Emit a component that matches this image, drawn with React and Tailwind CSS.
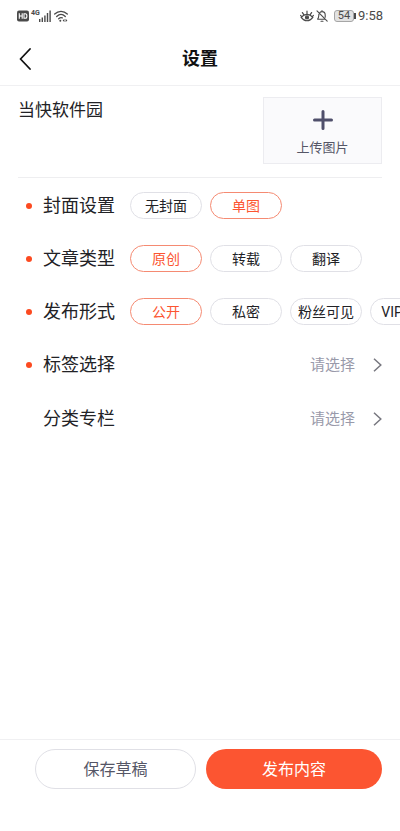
import { useState } from "react";

const optionRows = [
  {
    name: "cover",
    label: "封面设置",
    options: ["无封面", "单图"],
    initial: "单图",
  },
  {
    name: "type",
    label: "文章类型",
    options: ["原创", "转载", "翻译"],
    initial: "原创",
  },
  {
    name: "visibility",
    label: "发布形式",
    options: ["公开", "私密", "粉丝可见", "VIP可见"],
    initial: "公开",
  },
];

const selectRows = [
  { label: "标签选择", required: true },
  { label: "分类专栏", required: false },
];

const StatusBar = () => (
  <div className="flex h-8 items-center justify-between px-[17px] text-[#4a4a4a]">
    <div className="flex items-center">
      {/* HD badge */}
      <svg className="h-3 w-3" viewBox="0 0 12 12">
        <rect x="0" y="0.5" width="12" height="11" rx="2" fill="#4a4a4a" />
        <path
          d="M2.3 3.2v5.6M5.2 3.2v5.6M2.3 6h2.9M7 3.7h1.3c1 0 1.6.8 1.6 2.3S9.3 8.3 8.3 8.3H7z"
          fill="none"
          stroke="#fff"
          strokeWidth="1.1"
        />
      </svg>
      <span className="ml-0.5 self-start font-['Roboto',sans-serif] text-[7px] font-bold leading-[7px]">
        4G
      </span>
      {/* Signal */}
      <svg className="-ml-px h-3 w-3" viewBox="0 0 12 12" fill="currentColor">
        <rect x="0" y="9" width="1.4" height="3" />
        <rect x="2.6" y="7.5" width="1.4" height="4.5" />
        <rect x="5.2" y="5.5" width="1.4" height="6.5" />
        <rect x="7.8" y="3" width="1.4" height="9" />
        <rect x="10.4" y="0.5" width="1.4" height="11.5" />
      </svg>
      {/* Wi-Fi */}
      <svg
        className="ml-[3px] h-3 w-3.5"
        viewBox="0 0 14 12"
        fill="none"
        stroke="currentColor"
        strokeWidth="1.3"
        strokeLinecap="round"
      >
        <path d="M0.7 4C4.4 0.4 9.6 0.4 13.3 4" />
        <path d="M2.7 6.5c2.6-2.5 6-2.5 8.6 0" />
        <path d="M4.7 8.7c1.3-1.2 2.6-1.3 3.6-.8" />
        <circle cx="6.3" cy="10.7" r="1" fill="currentColor" stroke="none" />
        <path
          d="M10.400 8.700L8.600 10.400l1.800 1.700zM11.600 8.700l1.800 1.700-1.800 1.700z"
          fill="currentColor"
          stroke="none"
        />
      </svg>
    </div>

    <div className="flex items-center">
      {/* Eye comfort */}
      <svg
        className="h-3 w-3.5"
        viewBox="0 0 14 12"
        fill="none"
        stroke="currentColor"
        strokeWidth="1.2"
        strokeLinecap="round"
      >
        <path d="M1.2 7.300c3.200-3.800 8.400-3.800 11.600 0-3.200 4.600-8.400 4.600-11.600 0z" />
        <circle cx="7" cy="7.400" r="1.500" fill="currentColor" />
        <path d="M7 4V1.200M3.800 4.700L2.400 2.600M10.200 4.700l1.400-2.100M1.600 6.600L.6 5.400M12.400 6.600l1-1.200" />
      </svg>
      {/* Muted bell */}
      <svg
        className="ml-0.5 h-3 w-3"
        viewBox="0 0 12 12"
        fill="none"
        stroke="currentColor"
        strokeWidth="1.1"
        strokeLinecap="round"
        strokeLinejoin="round"
      >
        <path d="M4 2.4C4.5 1.9 5.2 1.6 6 1.6c2 0 3.2 1.4 3.2 3.4V7.2M2.9 4.2C2.6 6.3 3 7.5 1.600 9.200h7.400M6 1.500V.6M5 11.200h2M1 .8l10.200 10.400" />
      </svg>
      <div className="ml-1.5 flex h-3 w-5 items-center justify-center rounded-[3px] border border-[#a6a6a6] bg-[#e2e2e2] font-['Roboto',sans-serif] text-[11px] leading-3">
        54
      </div>
      <span className="h-1.5 w-0.5 bg-[#4a4a4a]" />
      <span className="ml-0.5 font-['Roboto',sans-serif] text-[13px] leading-4">9:58</span>
    </div>
  </div>
);

const RowLabel = ({ required, children }) => (
  <span className="flex shrink-0 items-center">
    <span
      className={`mr-[11px] h-1.5 w-1.5 rounded-full ${required ? "bg-[#fc4a20]" : ""}`}
    />
    <span className="text-lg leading-6 text-[#222226]">{children}</span>
  </span>
);

const OptionRow = ({ row }) => {
  const [selected, setSelected] = useState(row.initial);

  return (
    <div
      role="radiogroup"
      aria-label={row.label}
      className="flex h-[53px] items-center gap-[15px] pl-[26px]"
    >
      <RowLabel required>{row.label}</RowLabel>
      {/* Options scroll sideways when they do not fit */}
      <div className="flex min-w-0 flex-1 gap-2 overflow-x-auto [scrollbar-width:none]">
        {row.options.map((option) => (
          <label
            key={option}
            className={`relative flex h-[27px] w-[72px] shrink-0 cursor-pointer items-center justify-center whitespace-nowrap rounded-full border text-sm ${
              selected === option
                ? "border-[#f58a72] text-[#fc5531]"
                : "border-[#e0e0e6] text-[#222226]"
            }`}
          >
            <input
              type="radio"
              name={row.name}
              value={option}
              checked={selected === option}
              onChange={() => setSelected(option)}
              className="sr-only"
            />
            {option}
          </label>
        ))}
      </div>
    </div>
  );
};

const SelectRow = ({ row }) => (
  <button
    type="button"
    className="flex h-[54px] w-full items-center justify-between pl-[26px] pr-[18px]"
  >
    <RowLabel required={row.required}>{row.label}</RowLabel>
    <span className="flex items-center gap-[18px] text-[15px] text-[#999aaa]">
      请选择
      <svg
        className="h-3.5 w-[9px]"
        viewBox="0 0 9 14"
        fill="none"
        stroke="#77777f"
        strokeWidth="1.5"
      >
        <path d="M1 0.8L7.8 7 1 13.2" />
      </svg>
    </span>
  </button>
);

export default function App() {
  return (
    <div className="flex min-h-screen flex-col bg-white font-['Roboto','Noto_Sans_CJK_SC',sans-serif]">
      <StatusBar />

      {/* Header */}
      <header className="grid h-[54px] grid-cols-[1fr_auto_1fr] items-center border-b border-[#f0f0f2] px-[18px]">
        <button type="button" aria-label="返回" className="w-4">
          <svg
            className="h-[22px] w-4"
            viewBox="0 0 16 22"
            fill="none"
            stroke="#111"
            strokeWidth="1.8"
            strokeLinecap="round"
            strokeLinejoin="round"
          >
            <path d="M12 1L2.5 11 12 21" />
          </svg>
        </button>
        <h1 className="text-lg font-bold leading-6 text-[#111]">设置</h1>
      </header>

      <main className="flex-1">
        {/* Article title and cover upload */}
        <section className="mx-[18px] flex items-start justify-between border-b border-[#eeeef0] pb-[13px] pt-[11px]">
          <p className="text-[17px] leading-[26px] text-[#222226]">当快软件园</p>
          <button
            type="button"
            className="flex h-[67px] w-[119px] flex-col items-center justify-end gap-2 border border-[#ececf0] bg-[#fafafc] pb-[5px] text-[#555666]"
          >
            <svg
              className="h-5 w-5"
              viewBox="0 0 20 20"
              fill="none"
              stroke="#4f4f6b"
              strokeWidth="3"
              strokeLinecap="round"
            >
              <path d="M10 1.5v17M1.5 10h17" />
            </svg>
            <span className="text-[13px] leading-5">上传图片</span>
          </button>
        </section>

        <section className="pt-px">
          {optionRows.map((row) => (
            <OptionRow key={row.name} row={row} />
          ))}
          {selectRows.map((row) => (
            <SelectRow key={row.label} row={row} />
          ))}
        </section>
      </main>

      {/* Bottom actions */}
      <footer className="flex gap-2.5 border-t border-[#f0f0f2] pb-[42px] pl-[35px] pr-[18px] pt-[9px]">
        <button
          type="button"
          className="h-10 flex-[160] rounded-full border border-[#e0e0e6] pt-0.5 text-base text-[#555666]"
        >
          保存草稿
        </button>
        <button
          type="button"
          className="h-10 flex-[177] rounded-full bg-[#fc5531] pt-0.5 text-base text-white"
        >
          发布内容
        </button>
      </footer>
    </div>
  );
}
